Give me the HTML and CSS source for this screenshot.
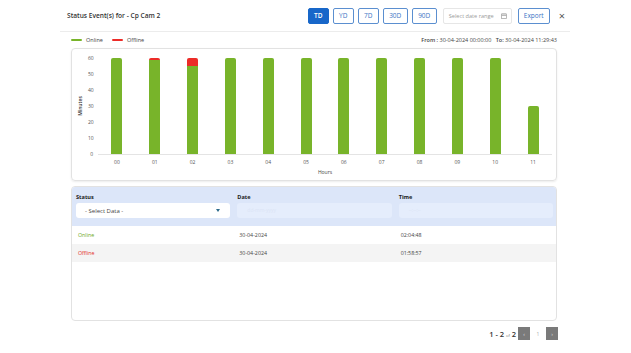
FILE: index.html
```html
<!DOCTYPE html>
<html lang="en">
<head>
    <meta charset="UTF-8">
    <title>Status Events</title>
    <link rel="stylesheet" href="styles.css">
</head>
<body>
<div id="main">
    <div class="head">
        <div class="title">Status Event(s) for - Cp Cam 2</div>
        <div class="tools">
            <button class="range active">TD</button>
            <button class="range">YD</button>
            <button class="range">7D</button>
            <button class="range">30D</button>
            <button class="range">90D</button>
            <div class="date-range">
                <span>Select date range</span>
                <svg width="6" height="6" viewBox="0 0 6 6"><rect x="0.5" y="1" width="5" height="4.5" fill="none" stroke="#aaa" stroke-width="0.8"/><path d="M0.5 2.5H5.5M2 0V1.5M4 0V1.5" stroke="#aaa" stroke-width="0.8"/></svg>
            </div>
            <button class="export">Export</button>
            <span class="close">&times;</span>
        </div>
    </div>

    <div class="legend">
        <span class="key"><i class="swatch on"></i>Online</span>
        <span class="key"><i class="swatch off"></i>Offline</span>
        <span class="period"><b>From :</b> 30-04-2024 00:00:00 &nbsp; <b>To:</b> 30-04-2024 11:29:43</span>
    </div>

    <div class="chart-box">
        <div class="y-title"><span>Minutes</span></div>
        <div class="y-axis">
            <span>60</span><span>50</span><span>40</span><span>30</span><span>20</span><span>10</span><span>0</span>
        </div>
        <div class="plot-wrap">
            <div class="plot">
                <div class="col"><div class="bar"><i class="off" style="height:0px"></i><i class="on" style="height:96px"></i></div></div>
                <div class="col"><div class="bar"><i class="off" style="height:2px"></i><i class="on" style="height:94px"></i></div></div>
                <div class="col"><div class="bar"><i class="off" style="height:8px"></i><i class="on" style="height:88px"></i></div></div>
                <div class="col"><div class="bar"><i class="off" style="height:0px"></i><i class="on" style="height:96px"></i></div></div>
                <div class="col"><div class="bar"><i class="off" style="height:0px"></i><i class="on" style="height:96px"></i></div></div>
                <div class="col"><div class="bar"><i class="off" style="height:0px"></i><i class="on" style="height:96px"></i></div></div>
                <div class="col"><div class="bar"><i class="off" style="height:0px"></i><i class="on" style="height:96px"></i></div></div>
                <div class="col"><div class="bar"><i class="off" style="height:0px"></i><i class="on" style="height:96px"></i></div></div>
                <div class="col"><div class="bar"><i class="off" style="height:0px"></i><i class="on" style="height:96px"></i></div></div>
                <div class="col"><div class="bar"><i class="off" style="height:0px"></i><i class="on" style="height:96px"></i></div></div>
                <div class="col"><div class="bar"><i class="off" style="height:0px"></i><i class="on" style="height:96px"></i></div></div>
                <div class="col"><div class="bar"><i class="off" style="height:0px"></i><i class="on" style="height:48px"></i></div></div>
            </div>
            <div class="x-labels">
                <span>00</span><span>01</span><span>02</span><span>03</span><span>04</span><span>05</span>
                <span>06</span><span>07</span><span>08</span><span>09</span><span>10</span><span>11</span>
            </div>
            <div class="x-title">Hours</div>
        </div>
    </div>

    <div class="grid-box">
        <div class="grid-head">
            <div class="cell">
                <label>Status</label>
                <div class="select"><span>- Select Data -</span><i class="caret"></i></div>
            </div>
            <div class="cell">
                <label>Date</label>
                <div class="filter">dd-mm-yyyy</div>
            </div>
            <div class="cell">
                <label>Time</label>
                <div class="filter">--:--:--</div>
            </div>
        </div>
        <div class="grid-row">
            <span class="online">Online</span><span>30-04-2024</span><span>02:04:48</span>
        </div>
        <div class="grid-row alt">
            <span class="offline">Offline</span><span>30-04-2024</span><span>01:58:57</span>
        </div>
    </div>

    <div class="pager">
        <span class="count"><b>1 - 2</b> <small>of</small> <b>2</b></span>
        <button class="page-btn">&lsaquo;</button>
        <span class="page-num">1</span>
        <button class="page-btn">&rsaquo;</button>
    </div>
</div>
</body>
</html>
```

FILE: styles.css
```css
body {
    margin: 0;
    background: #fff;
    font-family: "Open Sans", "Noto Sans", sans-serif;
    color: #333;
}

#main {
    width: 510px;
    margin-left: 60px;
}

.head {
    height: 31px;
    border-bottom: 1px solid #ececec;
    display: flex;
    align-items: center;
    padding: 0 5px 0 7px;
}

.title {
    font-size: 6.6px;
    font-weight: 600;
    color: #333;
}

.tools {
    margin-left: auto;
    display: flex;
    align-items: center;
}

.tools button {
    font-family: inherit;
    cursor: pointer;
}

.range {
    height: 16px;
    padding: 0;
    margin-right: 4px;
    border: 1px solid #5b8fd0;
    border-radius: 2px;
    background: #fff;
    color: #3a74c4;
    font-size: 6.5px;
}

.range:nth-child(1), .range:nth-child(2), .range:nth-child(3) { width: 21px; }
.range:nth-child(4), .range:nth-child(5) { width: 25px; }

.range.active {
    background: #1867c9;
    border-color: #1867c9;
    color: #fff;
    font-weight: 600;
}

.date-range {
    width: 69px;
    height: 16px;
    box-sizing: border-box;
    margin-left: 2px;
    border: 1px solid #e6e6e6;
    border-radius: 2px;
    display: flex;
    align-items: center;
    justify-content: space-between;
    padding: 0 4px 0 5px;
    font-size: 5.6px;
    color: #9a9a9a;
}

.export {
    height: 16px;
    width: 32px;
    padding: 0;
    margin-left: 6px;
    border: 1px solid #5b8fd0;
    border-radius: 2px;
    background: #fff;
    color: #3a74c4;
    font-size: 6.5px;
}

.close {
    margin-left: 9px;
    font-size: 11px;
    line-height: 1;
    color: #555;
}

.legend {
    display: flex;
    align-items: center;
    height: 16px;
    padding: 0 13px 0 11px;
    font-size: 5.5px;
    color: #444;
}

.key {
    display: flex;
    align-items: center;
    margin-right: 9px;
}

.swatch {
    width: 11px;
    height: 2.5px;
    border-radius: 1px;
    margin-right: 4px;
}

.swatch.on { background: #78b42a; }
.swatch.off { background: #ec2c28; }

.period {
    margin-left: auto;
    font-size: 5.5px;
    color: #444;
}

.period b { font-weight: 600; }

.chart-box {
    margin: 0 13px 0 11px;
    height: 133px;
    box-sizing: border-box;
    border: 1px solid #e2e2e2;
    border-radius: 4px;
    box-shadow: 0 1px 2px rgba(0, 0, 0, 0.08);
    display: flex;
    padding: 1px 4px 0 0;
}

.y-title {
    width: 16px;
    height: 112px;
    display: flex;
    align-items: center;
    justify-content: center;
}

.y-title span {
    transform: rotate(-90deg);
    font-size: 5px;
    font-weight: 600;
    color: #333;
    white-space: nowrap;
}

.y-axis {
    width: 10px;
    display: flex;
    flex-direction: column;
    font-size: 5px;
    color: #555;
    text-align: right;
}

.y-axis span {
    height: 16px;
    line-height: 16px;
    padding-right: 5px;
}

.plot-wrap {
    flex: 1;
    display: flex;
    flex-direction: column;
}

.plot {
    margin-top: 8px;
    height: 96px;
    border-bottom: 1px solid #e4e4e4;
    display: flex;
}

.col {
    flex: 1;
    display: flex;
    justify-content: center;
    align-items: flex-end;
}

.bar {
    width: 11px;
    display: flex;
    flex-direction: column;
    border-radius: 2px 2px 0 0;
    overflow: hidden;
}

.bar i { display: block; }
.bar .on { background: #78b42a; }
.bar .off { background: #ec2c28; }

.x-labels {
    display: flex;
    height: 14px;
    line-height: 15px;
    font-size: 5px;
    color: #555;
}

.x-labels span {
    flex: 1;
    text-align: center;
}

.x-title {
    text-align: center;
    font-size: 5px;
    color: #444;
    line-height: 6px;
}

.grid-box {
    margin: 5px 13px 0 11px;
    height: 135px;
    box-sizing: border-box;
    border: 1px solid #e2e2e2;
    border-radius: 4px;
    overflow: hidden;
}

.grid-head {
    background: #dce6f9;
    height: 39px;
    display: grid;
    grid-template-columns: 1fr 1fr 1fr;
}

.grid-head .cell {
    padding: 6px 3px 0 4px;
}

.grid-head label {
    display: block;
    height: 9px;
    line-height: 9px;
    font-size: 5.6px;
    font-weight: 700;
    color: #222;
    margin-bottom: 1px;
}

.select {
    height: 15px;
    border-radius: 3px;
    background: #fff;
    display: flex;
    align-items: center;
    justify-content: space-between;
    padding: 0 10px 0 9px;
    font-size: 6px;
    color: #444;
}

.caret {
    width: 0;
    height: 0;
    border-left: 2.5px solid transparent;
    border-right: 2.5px solid transparent;
    border-top: 3px solid #2b6a8a;
}

.filter {
    height: 15px;
    border-radius: 3px;
    background: #e5edfc;
    line-height: 15px;
    padding-left: 10px;
    font-size: 5px;
    color: #dbe4f5;
}

.grid-row {
    display: grid;
    grid-template-columns: 1fr 1fr 1fr;
    height: 18px;
    line-height: 18px;
    font-size: 5.3px;
    color: #444;
}

.grid-row span { padding-left: 6px; }
.grid-row.alt { background: #f4f4f4; }
.grid-row .online { color: #6aa81f; }
.grid-row .offline { color: #e3302d; }

.pager {
    display: flex;
    justify-content: flex-end;
    align-items: center;
    margin: 6px 12px 0 0;
    height: 13px;
}

.count {
    font-size: 7.5px;
    color: #333;
    margin-right: 2px;
}

.count b { font-weight: 600; }
.count small { font-size: 4px; color: #777; }

.page-btn {
    width: 12px;
    height: 13px;
    padding: 0;
    border: none;
    background: #7a7a7a;
    color: #ddd;
    font-size: 5px;
}

.page-num {
    width: 16px;
    text-align: center;
    font-size: 5px;
    color: #aaa;
}
```
